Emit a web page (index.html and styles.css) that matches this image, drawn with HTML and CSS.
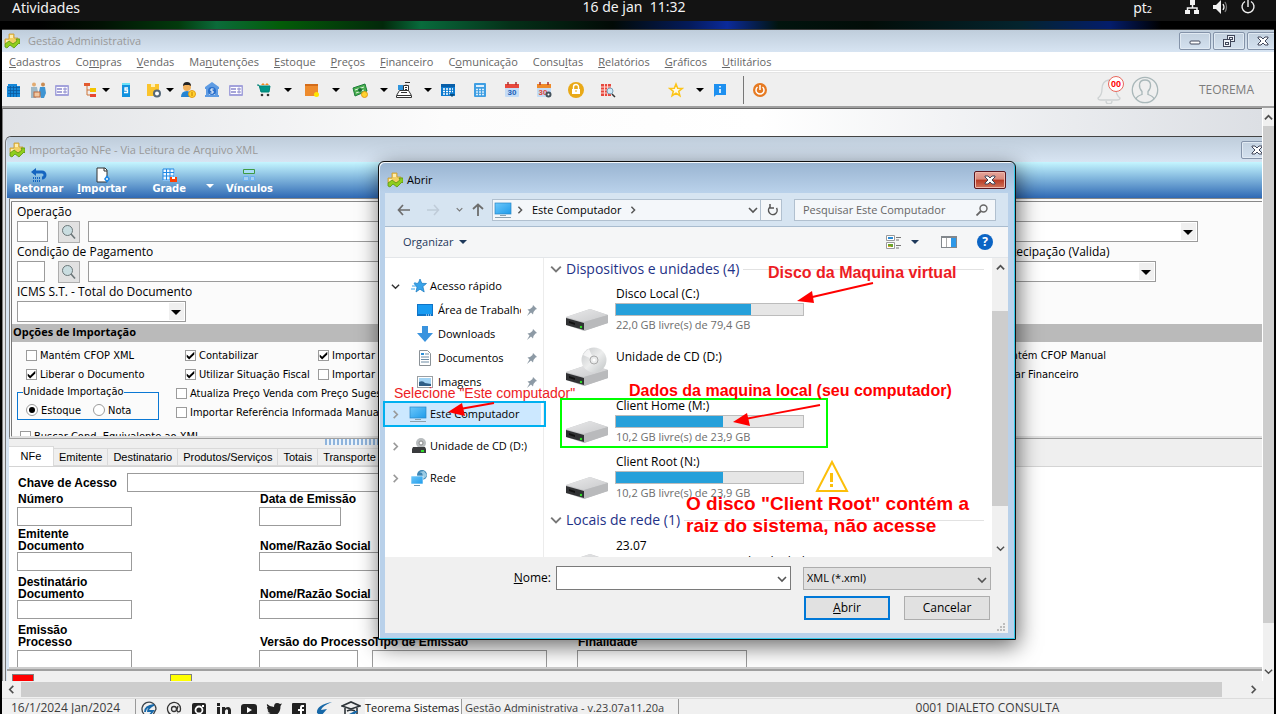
FILE: index.html
```html
<!DOCTYPE html>
<html lang="pt-BR">
<head>
<meta charset="utf-8">
<title>Gestão Administrativa</title>
<link rel="stylesheet" href="styles.css">
</head>
<body>
<svg class="defs" width="0" height="0" aria-hidden="true">
  <defs>
    <linearGradient id="driveTop" x1="0" y1="0" x2="1" y2="1"><stop offset="0" stop-color="#e9e9ea"/><stop offset="1" stop-color="#c9cacc"/></linearGradient>
    <linearGradient id="screen" x1="0" y1="0" x2="1" y2="1"><stop offset="0" stop-color="#6cc8fb"/><stop offset="1" stop-color="#1f9bea"/></linearGradient>
    <linearGradient id="disc" x1="0" y1="0" x2="1" y2="1"><stop offset="0" stop-color="#c4c6c8"/><stop offset=".5" stop-color="#eceded"/><stop offset="1" stop-color="#bfc3c4"/></linearGradient>
    <symbol id="app" viewBox="0 0 16 16"><path d="M5 1h5v4h4v6H1V6h4z" fill="#f2cf63" stroke="#c99a2b" stroke-width=".8"/><path d="M6 2h3v3H6zM2 7h3v3H2z" fill="#ffeeb0"/><path d="M1 11l4-3 4 3 4-3-1-2h4v5l-1-1-5 5-4-3-3 3-2-1z" fill="#8fce1d" stroke="#5b9412" stroke-width=".8"/></symbol>
    <symbol id="caret" viewBox="0 0 8 8"><path d="M0 2h8L4 6z"/></symbol>
    <symbol id="down" viewBox="0 0 10 10"><path d="M1 3l4 4 4-4" fill="none" stroke="currentColor" stroke-width="1.6"/></symbol>
    <symbol id="up" viewBox="0 0 10 10"><path d="M1 7l4-4 4 4" fill="none" stroke="currentColor" stroke-width="2"/></symbol>
    <symbol id="right" viewBox="0 0 10 10"><path d="M3 1l4 4-4 4" fill="none" stroke="currentColor" stroke-width="1.8"/></symbol>
    <symbol id="left" viewBox="0 0 10 10"><path d="M7 1L3 5l4 4" fill="none" stroke="currentColor" stroke-width="1.8"/></symbol>
    <symbol id="close" viewBox="0 0 12 10"><path d="M1 1h3l2 2 2-2h3v1L8 5l3 3v1H8L6 7 4 9H1V8l3-3-3-3z" fill="#fff" stroke="#41475a"/></symbol>
    <symbol id="card" viewBox="0 0 16 16"><rect x="1" y="3" width="14" height="11" rx="1" fill="#a3a2db"/><rect x="2.500" y="5" width="11" height="7" fill="#fff"/><path d="M3 7h5M3 10h5" stroke="#8a88cc" stroke-width="1.500"/><path d="M9 7h4M9 10h4M11 5.500v6" stroke="#8a88cc"/></symbol>
    <symbol id="mag" viewBox="0 0 16 16"><circle cx="6.500" cy="6.500" r="5" fill="#c9dde0" stroke="#6b7678"/><path d="M10 10l4 4.500" stroke="#6b7678" stroke-width="1.600"/></symbol>
    <symbol id="drive" viewBox="0 0 44 24"><path d="M1 9L25 1l18 6v8L19 23 1 17z" fill="#c4c5c7"/><path d="M1 9L25 1l18 6L19 14z" fill="url(#driveTop)"/><path d="M19 14L43 7v8L19 23z" fill="#b9babc"/><path d="M1 10l18 5v7L1 17z" fill="#303133"/><path d="M4 13l6 2v2l-6-2z" fill="#111"/><circle cx="16" cy="19" r="1.200" fill="#31e02b"/></symbol>
    <symbol id="pc" viewBox="0 0 18 16"><rect x="1" y="1" width="16" height="11" fill="url(#screen)" stroke="#2a86c6" stroke-width=".7"/><path d="M1 15.500h16M6 13.500h6" stroke="#8ba0ad"/></symbol>
    <symbol id="pin" viewBox="0 0 12 12"><path d="M7 1l4 4-1.500.5-2 2.500-.5 2.500-2-2L1 12l2.500-4.500-2-2L4 5l2.500-2z" fill="#8d9aa5"/></symbol>
    <symbol id="cal" viewBox="0 0 16 16"><rect x="1" y="4" width="14" height="11" rx="1" fill="#c4dcf6"/><path d="M1 2h14v4H1z"/><path d="M4 0v3M12 0v3" stroke="#a33" stroke-width="1.500"/></symbol>
  </defs>
</svg>

<header class="topbar">
  <button class="activities">Atividades</button>
  <time class="clock">16 de jan&nbsp; 11:32</time>
  <div class="tray">
    <span class="lang">pt<small>2</small></span>
    <svg class="i16" viewBox="0 0 16 16"><path d="M6 0h5v5H6zM1 10h5v4H1zM10 10h5v4h-5z" fill="#f2f2f2"/><path d="M8.500 4v4M3.500 11V8h9.500v3" fill="none" stroke="#f2f2f2" stroke-width="1.500"/></svg>
    <svg class="i16" viewBox="0 0 16 16"><path d="M1 5h3l5-5v14L4 9H1z" fill="#f2f2f2"/><path d="M11 4q2 3 0 6" fill="none" stroke="#f2f2f2" stroke-width="1.300"/><path d="M13 2q3 5 0 10" fill="none" stroke="#777" stroke-width="1.300"/></svg>
    <svg class="i16" viewBox="0 0 16 16"><path d="M5 1.500a6 6 0 1 0 6 0M8 0v7" fill="none" stroke="#f2f2f2" stroke-width="1.400"/></svg>
  </div>
</header>
<div class="wallpaper"></div>

<main class="app">
  <div class="titlebar">
    <svg class="i16"><use href="#app"/></svg><span>Gestão Administrativa</span>
    <div class="winbtns">
      <button aria-label="Minimizar"><svg width="12" height="10" viewBox="0 0 12 10"><rect x="1" y="5" width="10" height="3" rx="1" fill="#fff" stroke="#41475a"/></svg></button>
      <button aria-label="Restaurar"><svg width="12" height="12" viewBox="0 0 12 12"><g fill="#eef3f8" stroke="#41475a"><rect x="4.500" y=".5" width="7" height="6"/><rect x="6.500" y="2.500" width="3" height="2"/><rect x=".5" y="4.500" width="7" height="7"/><rect x="2.500" y="7.500" width="3" height="2"/></g></svg></button>
      <button aria-label="Fechar"><svg width="12" height="10"><use href="#close"/></svg></button>
    </div>
  </div>
  <nav class="menubar">
    <button><u>C</u>adastros</button><button>Co<u>m</u>pras</button><button><u>V</u>endas</button><button>Ma<u>n</u>utenções</button><button><u>E</u>stoque</button><button><u>P</u>reços</button><button><u>F</u>inanceiro</button><button>C<u>o</u>municação</button><button>Consu<u>l</u>tas</button><button><u>R</u>elatórios</button><button><u>G</u>ráficos</button><button><u>U</u>tilitários</button>
  </nav>
  <div class="toolbar">
    <button aria-label="Empresa"><svg class="i16" viewBox="0 0 16 16"><path d="M2 2h9v2h3v11H1V4h1z" fill="#1587d8"/><path d="M2 5.500h12M2 8.500h12M2 11.500h12M4.500 4v11M7.500 4v11M10.500 4v11" stroke="#0b5a9e" stroke-width=".8"/></svg></button>
    <button aria-label="Pessoas"><svg class="i16" viewBox="0 0 16 16"><circle cx="4" cy="2.500" r="2" fill="#e2ab71"/><circle cx="13" cy="2.500" r="2" fill="#c98c54"/><path d="M1 5h6l1 5-2 6H1z" fill="#9fb9c7"/><path d="M10 5h5l1 6-2 5h-3L9 10z" fill="#3f95d3"/><rect x="4" y="10" width="6" height="5" fill="#f1c7a0" stroke="#bd6a3e"/></svg></button>
    <button aria-label="Cadastro"><svg class="i16"><use href="#card"/></svg></button>
    <button class="g4" aria-label="Estrutura"><svg class="i16" viewBox="0 0 16 16"><path d="M2 1h6v3H2z" fill="#e35a2e"/><path d="M8 6h6v4H8z" fill="#f3c500"/><path d="M8 12h6v3H8z" fill="#e8472f"/><path d="M5 4v9h3M5 8h3" fill="none" stroke="#cf7438"/></svg></button>
    <button class="drop" aria-label="Mais"><svg><use href="#caret"/></svg></button>
    <button class="g4" aria-label="Telefone"><svg class="i16" viewBox="0 0 16 16"><path d="M4 1h8v14H4z" fill="#1292df"/><path d="M4 1h8v2H4z" fill="#6ee3f7"/><path d="M10 6H7v2h2.500v2.500H6" fill="none" stroke="#fff" stroke-width="1.300"/></svg></button>
    <button class="g4" aria-label="Produtos"><svg class="i16" viewBox="0 0 16 16"><path d="M1 2h12v12H1z" fill="#fbc42c"/><path d="M5 2h4v3H5z" fill="#fff0b3"/><circle cx="11" cy="11.500" r="3" fill="#fff" stroke="#57697a" stroke-width="2"/></svg></button>
    <button class="drop" aria-label="Mais"><svg><use href="#caret"/></svg></button>
    <button class="g2" aria-label="Cliente"><svg class="i16" viewBox="0 0 16 16"><path d="M1 15q0-6 6-6 4 0 5 6z" fill="#2585d3"/><circle cx="7" cy="5" r="4" fill="#f2b15c"/><path d="M3 4q0-4 4-4t4 4L9 3H5z" fill="#222"/><circle cx="12" cy="12" r="3.500" fill="#ffd32f" stroke="#e39b18"/><path d="M12 10v4" stroke="#c77c00"/></svg></button>
    <button aria-label="Banco"><svg class="i16" viewBox="0 0 16 16"><path d="M1 5l7-5 7 5v2H1zM2 7h3v6H2zM11 7h3v6h-3zM1 13h14v2H1z" fill="#5f9ce3"/><circle cx="8" cy="9" r="4" fill="#2b71cc"/><path d="M9.500 7H7v2h2v2H6.500" fill="none" stroke="#fff"/></svg></button>
    <button aria-label="Fichas"><svg class="i16"><use href="#card"/></svg></button>
    <button class="g4" aria-label="Vendas"><svg class="i16" viewBox="0 0 16 16"><path d="M1 3h2l2 7h8l1-6H4" fill="#009688" stroke="#008377"/><path d="M5 3l2-2 2 2 2-2 2 2z" fill="#f18a20"/><circle cx="6" cy="13" r="1.300" fill="#333"/><circle cx="12" cy="13" r="1.300" fill="#333"/></svg></button>
    <button class="drop g8" aria-label="Mais"><svg><use href="#caret"/></svg></button>
    <button class="g8" aria-label="Caixa"><svg class="i16" viewBox="0 0 16 16"><path d="M1 2h13v12H1z" fill="#ee8b2d"/><path d="M1 2h13v2H1z" fill="#d46c1a"/><circle cx="12.500" cy="12.500" r="2.500" fill="#ffe500"/></svg></button>
    <button class="drop g8" aria-label="Mais"><svg><use href="#caret"/></svg></button>
    <button class="g8" aria-label="Financeiro"><svg class="i16" viewBox="0 0 16 16"><path d="M1 6l12-4 2 7-12 5z" fill="#4caf50" stroke="#1c7c3a"/><path d="M3 8l9-3M4 11l8-3" stroke="#dff3df"/><circle cx="8" cy="8" r="2" fill="#176b34"/><circle cx="12.500" cy="12.500" r="3" fill="#ffd32f" stroke="#e39b18"/></svg></button>
    <button class="drop g8" aria-label="Mais"><svg><use href="#caret"/></svg></button>
    <button class="g4" aria-label="Registradora"><svg class="i16" viewBox="0 0 16 16"><path d="M3.500 8.500h9l3 5v2H.500v-2z" fill="#fff" stroke="#333"/><path d="M2 3h5v5H2z" fill="#2f95dd"/><path d="M7.500 3.500h5v5h-5z" fill="#fff" stroke="#333"/><path d="M9 .500h5M10 2.500v1M9 5.500h2M9 7.500h2M12 5.500h1M5 10.500h6M1 13.500h14" stroke="#333"/></svg></button>
    <button class="drop g8" aria-label="Mais"><svg><use href="#caret"/></svg></button>
    <button class="g4" aria-label="Agenda"><svg class="i16" viewBox="0 0 16 16"><path d="M1 2h14v12H1z" fill="#0d7bd0"/><path d="M1 2h14v3H1z" fill="#0a5fa8"/><path d="M3 7h10M3 9.500h10M3 12h7" stroke="#fff" stroke-width="1.500" stroke-dasharray="2 1"/><path d="M9 12h6l-3 3z" fill="#094d80"/></svg></button>
    <button class="g8" aria-label="Calculadora"><svg class="i16" viewBox="0 0 16 16"><rect x="2" y="1" width="12" height="14" rx="1" fill="#3f9ee2"/><path d="M4 3h8v2H4z" fill="#dceefc"/><path d="M4 7.500h8M4 10h8M4 12.500h8" stroke="#dceefc" stroke-width="1.500" stroke-dasharray="2 1"/></svg></button>
    <button class="g8" aria-label="Calendário"><svg class="i16"><use href="#cal" fill="#e8483c"/><text x="8" y="13" class="daynum">30</text></svg></button>
    <button class="g8" aria-label="Configurar calendário"><svg class="i16"><use href="#cal" fill="#ef8a2a"/><text x="7" y="13" class="daynum red">30</text><circle cx="12.500" cy="12.500" r="2" fill="#fff" stroke="#44525c" stroke-width="2"/></svg></button>
    <button class="g8" aria-label="Bloquear"><svg class="i16" viewBox="0 0 16 16"><circle cx="8" cy="8" r="8" fill="#e9a917"/><path d="M4 7h8v5H4z" fill="#fff"/><path d="M5.500 7V5a2.500 2.500 0 0 1 5 0v2" fill="none" stroke="#fff" stroke-width="1.400"/><path d="M8 8v2" stroke="#e9a917"/></svg></button>
    <button class="g8" aria-label="Pesquisa"><svg class="i16" viewBox="0 0 16 16"><rect x="1" y="2" width="10" height="12" fill="#e5483e"/><path d="M1 5h10M1 8h10M1 11h10M4.500 2v12M7.500 2v12" stroke="#ffd5cf"/><circle cx="10" cy="9" r="3" fill="#cfe8f7" stroke="#7aa0b8"/><path d="M12 12l3 3" stroke="#333" stroke-width="1.500"/></svg></button>
    <button class="g44" aria-label="Favoritos"><svg class="i16" viewBox="0 0 16 16"><path d="M8 2l1.700 4.200 4.500.3-3.500 2.800 1.200 4.400L8 11.200l-3.900 2.500 1.200-4.400L1.800 6.500l4.500-.3z" fill="#fffbe6" stroke="#fcc419" stroke-width="1.500"/></svg></button>
    <button class="drop g8" aria-label="Mais"><svg><use href="#caret"/></svg></button>
    <button class="g4" aria-label="Informação"><svg class="i16" viewBox="0 0 16 16"><path d="M2 2h12v11H4l-2 2z" fill="#1e90f0"/><path d="M8 4v1.500M8 7v4" stroke="#fff" stroke-width="1.600"/></svg></button>
    <span class="sep"></span>
    <button class="g4" aria-label="Sair"><svg class="i16" viewBox="0 0 16 16"><circle cx="8" cy="8" r="7" fill="#e67a22"/><path d="M5.500 5a4 4 0 1 0 5 0M8 3v5" fill="none" stroke="#fff" stroke-width="1.500"/></svg></button>
    <div class="user">
      <button class="bell" aria-label="Notificações"><svg width="28" height="28" viewBox="0 0 28 28"><path d="M3 22q4-3 4-9 0-8 7-9 7 1 7 9 0 6 4 9 0 2-3 2H6q-3 0-3-2zM11 25q0 3 3 3t3-3" fill="none" stroke="#ced2d3" stroke-width="1.300"/></svg><span class="badge">00</span></button>
      <button aria-label="Usuário"><svg width="28" height="28" viewBox="0 0 28 28"><g fill="none" stroke="#a9b7b9" stroke-width="1.300"><circle cx="14" cy="14" r="12.700"/><path d="M5 23q1-3 6-4.500v-3Q8 12 8.500 8.500 9 4 14 4t5.500 4.500q.5 3.500-2.500 7v3q5 1.500 6 4.500"/></g></svg></button>
      <span class="uname">TEOREMA</span>
    </div>
  </div>

  <div class="mdi">
    <div class="desk">
      <section class="child">
        <div class="titlebar inner">
          <svg class="i16"><use href="#app"/></svg><span>Importação NFe - Via Leitura de Arquivo XML</span>
          <div class="winbtns"><button aria-label="Fechar janela"><svg width="12" height="10"><use href="#close"/></svg></button></div>
        </div>
        <div class="ribbon">
          <button class="rb1"><svg class="i16" viewBox="0 0 16 16"><path d="M2 5h9a3 3 0 0 1 0 6" fill="none" stroke="#1565c0" stroke-width="3"/><path d="M0 5l5-4v8z" fill="#1565c0"/><path d="M2 11h8M2 14h8" stroke="#1565c0" stroke-dasharray="1 1" stroke-width="2"/></svg>Retornar</button>
          <button class="rb2"><svg class="i16" viewBox="0 0 16 16"><path d="M3 1h8l2 2v12H3z" fill="#fff" stroke="#333"/><path d="M10 1v3h3" fill="none" stroke="#333"/><path d="M13 8l3 4-3 4-3-4z" fill="#1e88e5"/><circle cx="13" cy="12" r="1" fill="#fff"/></svg><span><u>I</u>mportar</span></button>
          <button class="rb3"><svg class="i16" viewBox="0 0 16 16"><path d="M2 2h12v12H2z" fill="#eef7ff"/><path d="M2 2h11v11H2zM2 5.500h11M2 9h11M5.500 2v11M9 2v11" fill="none" stroke="#1e88e5"/><path d="M9 10h7v5H9z" fill="#ff3d00"/><path d="M11 10h3v2h-3z" fill="#fff"/></svg>Grade</button>
          <button class="rbdrop" aria-label="Opções de grade"><svg><use href="#caret"/></svg></button>
          <button class="rb4"><svg class="i16" viewBox="0 0 16 16"><path d="M2.500 2.500h11v4h-11z" fill="#a9ddf5" stroke="#3f9b43"/><path d="M2.500 9.500h5v4h-5zM9.500 9.500h4v4h-4z" fill="#a5cff5" stroke="#6bb1f0"/></svg>Vínculos</button>
        </div>

        <div class="panel">
          <div class="fields">
            <div class="field"><label for="op">Operação</label>
              <div class="ctl"><input id="op" class="w31"><button class="lookup" aria-label="Buscar operação"><svg class="i16"><use href="#mag"/></svg></button><input class="wide" aria-label="Descrição da operação"><span class="combo c1"><select aria-label="Tipo"></select></span></div></div>
            <div class="field"><div class="labels"><label for="cp">Condição de Pagamento</label><label for="ant">Antecipação (Valida)</label></div>
              <div class="ctl"><input id="cp" class="w28"><button class="lookup" aria-label="Buscar condição"><svg class="i16"><use href="#mag"/></svg></button><input class="wide" aria-label="Descrição da condição"><span class="combo c2"><select id="ant"></select></span></div></div>
            <div class="field"><label for="st">ICMS S.T. - Total do Documento</label>
              <div class="ctl"><span class="combo c3"><select id="st"></select></span></div></div>
          </div>
          <h2 class="band">Opções de Importação</h2>
          <div class="options">
            <label><input type="checkbox">Mantém CFOP XML</label><label><input type="checkbox" checked>Contabilizar</label><label><input type="checkbox" checked>Importar Duplicatas</label><label><input type="checkbox">Mantém CFOP Manual</label>
            <label><input type="checkbox" checked>Liberar o Documento</label><label><input type="checkbox" checked>Utilizar Situação Fiscal</label><label><input type="checkbox">Importar Pedidos</label><label><input type="checkbox">Gerar Financeiro</label>
          </div>
          <div class="unit">
            <fieldset><legend>Unidade Importação</legend><label><input type="radio" name="un" checked>Estoque</label><label><input type="radio" name="un">Nota</label></fieldset>
            <div class="unitopts"><label><input type="checkbox">Atualiza Preço Venda com Preço Sugestão</label><label><input type="checkbox">Importar Referência Informada Manualmente</label></div>
          </div>
          <label class="last"><input type="checkbox">Buscar Cond. Equivalente ao XML</label>
        </div>

        <div class="splitter"><span class="grip"></span></div>
        <div class="tabs" role="tablist">
          <button class="on" role="tab">NFe</button><button role="tab">Emitente</button><button role="tab">Destinatario</button><button role="tab">Produtos/Serviços</button><button role="tab">Totais</button><button role="tab">Transporte</button>
        </div>
        <div class="page">
          <div class="key"><label for="chave">Chave de Acesso</label><input id="chave"></div>
          <div class="row first">
            <div><label for="num">Número</label><input id="num" class="w115"></div>
            <div><label for="dt">Data de Emissão</label><input id="dt" class="w82"></div>
          </div>
          <h3>Emitente</h3>
          <div class="row">
            <div><label for="d1">Documento</label><input id="d1" class="w115"></div>
            <div class="span"><label for="n1">Nome/Razão Social</label><input id="n1" class="w400"></div>
          </div>
          <h3>Destinatário</h3>
          <div class="row">
            <div><label for="d2">Documento</label><input id="d2" class="w115"></div>
            <div class="span"><label for="n2">Nome/Razão Social</label><input id="n2" class="w400"></div>
          </div>
          <h3>Emissão</h3>
          <div class="row lastrow">
            <div><label for="pr">Processo</label><input id="pr" class="w115"></div>
            <div><label for="vp">Versão do Processo</label><input id="vp" class="w99"></div>
            <div><label for="te">Tipo de Emissão</label><input id="te" class="w175"></div>
            <div><label for="fi">Finalidade</label><input id="fi" class="w170"></div>
          </div>
        </div>
        <div class="legend"><span class="sw red"></span><span class="sw yellow"></span></div>
      </section>
    </div>
    <div class="vscroll"><svg><use href="#up"/></svg><div class="vtrack"><div class="vthumb"></div></div><svg><use href="#down"/></svg></div>
  </div>
  <div class="hscroll"><svg><use href="#left"/></svg><div class="hthumb"></div><svg><use href="#right"/></svg></div>

  <footer class="status">
    <span class="date">16/1/2024 Jan/2024</span>
    <div class="social">
      <a href="#" aria-label="Site"><svg viewBox="0 0 16 16"><path d="M3 13A7 7 0 1 1 15 8l-3 6" fill="none" stroke="#3d454c" stroke-width="1.300"/><path d="M4 11q0-6 9-7-6 3-6 6h5l-4 5" fill="none" stroke="#1769aa" stroke-width="1.800"/></svg></a>
      <a href="#" aria-label="E-mail"><svg viewBox="0 0 16 16"><path d="M12 13a6.500 6.500 0 1 1 2.500-5c0 4-4 3.500-3.500.5L12 5" fill="none" stroke="#333" stroke-width="1.300"/><circle cx="8" cy="8" r="2.500" fill="none" stroke="#333" stroke-width="1.300"/></svg></a>
      <a href="#" aria-label="Instagram"><svg viewBox="0 0 16 16"><rect x="1" y="2" width="14" height="14" rx="2" fill="#222"/><circle cx="8" cy="9" r="3.500" fill="none" stroke="#fff" stroke-width="1.800"/><path d="M11 4h2v2h-2z" fill="#fff"/></svg></a>
      <a href="#" aria-label="LinkedIn"><svg viewBox="0 0 16 16"><path d="M1 6h3v9H1zM1 2h3v3H1zM6 6h3v1q5-3 6 2v6h-3V9q-2-2-3 1v5H6z" fill="#222"/></svg></a>
      <a href="#" aria-label="YouTube"><svg viewBox="0 0 16 16"><rect y="3" width="16" height="12" rx="3" fill="#222"/><path d="M6 6l5 3-5 3z" fill="#fff"/></svg></a>
      <a href="#" aria-label="Twitter"><svg viewBox="0 0 16 16"><path d="M1 3q3 3 7 3 0-4 3-4 2 0 3 1l2-.5-1.500 2.500q0 9-8 10-4 0-6-2 3 0 4-1-2 0-3-2.500h1Q1 8 1 6h1Q.5 5 1 3z" fill="#222"/></svg></a>
      <a href="#" aria-label="Facebook"><svg viewBox="0 0 16 16"><rect x="1" y="2" width="14" height="14" rx="1" fill="#222"/><path d="M13 5h-2q-1 0-1 2v9M7 9h6" fill="none" stroke="#fff" stroke-width="2"/></svg></a>
      <a href="#" aria-label="Teorema"><svg viewBox="0 0 16 16"><path d="M1 12Q0 4 16 1 6 5 5 9l6-1-6 7z" fill="#1668a8"/></svg></a>
      <a href="#" class="cap" aria-label="Universidade"><svg viewBox="0 0 20 16"><path d="M1 5l9-4 9 4-9 3z" fill="none" stroke="#2d3338" stroke-width="1.600"/><path d="M4 7v8h12V7M6 10q4-2 8 0" fill="none" stroke="#2d3338" stroke-width="1.600"/><path d="M8 13l6-3h3l-6 6z" fill="#1769aa"/></svg></a>
    </div>
    <span class="brand">Teorema Sistemas</span>
    <span class="ver">Gestão Administrativa - v.23.07a11.20a</span>
    <span class="who">0001 DIALETO CONSULTA</span>
  </footer>
</main>

<section class="dialog" role="dialog" aria-label="Abrir">
  <div class="dtitle"><svg class="i16"><use href="#app"/></svg><span>Abrir</span><button class="dclose" aria-label="Fechar"><svg width="12" height="10"><use href="#close"/></svg></button></div>
  <div class="dbody">
    <div class="navrow">
      <button class="nb" aria-label="Voltar"><svg width="14" height="12" viewBox="0 0 14 12"><path d="M6 1L1.500 6 6 11M1.500 6H13" fill="none" stroke="#6d6d6d" stroke-width="1.700"/></svg></button>
      <button class="nb" aria-label="Avançar"><svg width="14" height="12" viewBox="0 0 14 12"><path d="M8 1l4.500 5L8 11M12.500 6H1" fill="none" stroke="#bfcbd8" stroke-width="1.500"/></svg></button>
      <button class="nb small" aria-label="Recentes"><svg width="7" height="7"><use href="#down"/></svg></button>
      <button class="nb up" aria-label="Acima"><svg width="12" height="14" viewBox="0 0 12 14"><path d="M1 6l5-4.500L11 6M6 1.500V13" fill="none" stroke="#6d6d6d" stroke-width="1.800"/></svg></button>
      <div class="path"><svg width="18" height="16"><use href="#pc"/></svg><svg class="ch" width="8" height="8"><use href="#right"/></svg><span>Este Computador</span><svg class="ch" width="8" height="8"><use href="#right"/></svg><button class="pd" aria-label="Histórico"><svg width="10" height="10"><use href="#down"/></svg></button><button class="rf" aria-label="Atualizar"><svg width="12" height="12" viewBox="0 0 12 12"><path d="M3 3a4.300 4.300 0 1 0 6.500 1M3 0v4h4" fill="none" stroke="#555" stroke-width="1.500"/></svg></button></div>
      <div class="search"><input aria-label="Pesquisar" placeholder="Pesquisar Este Computador"><svg width="12" height="12" viewBox="0 0 12 12"><circle cx="7.500" cy="4.500" r="3.500" fill="none" stroke="#666" stroke-width="1.400"/><path d="M5 7l-4.500 4.500" stroke="#666" stroke-width="1.800"/></svg></div>
    </div>
    <div class="cmdrow">
      <button class="org">Organizar <svg><use href="#caret"/></svg></button>
      <button class="view" aria-label="Modo de exibição"><svg width="16" height="16" viewBox="0 0 16 16"><path d="M.5 1.500h8v5h-8zM.5 8.500h8v6h-8z" fill="#fff" stroke="#9a9a9a"/><path d="M2 3h5v2H2z" fill="#2a8ad4"/><path d="M2 10h5v3H2z" fill="#6aa32b"/><path d="M2 12h3v1H2z" fill="#e0a030"/><path d="M10 3.500h5M10 6h3M10 11.500h5M10 14h3" stroke="#777"/></svg></button>
      <button class="vdrop" aria-label="Mais modos"><svg><use href="#caret"/></svg></button>
      <button class="pane" aria-label="Painel"><svg width="16" height="14" viewBox="0 0 16 14"><rect x=".5" y="1.500" width="15" height="11" fill="#fff" stroke="#82878c"/><path d="M0 1h16v2H0z" fill="#82878c"/><path d="M10 3h5v9h-5z" fill="#2d98e8"/><path d="M5.500 3v9" stroke="#aaa"/></svg></button>
      <button class="help" aria-label="Ajuda">?</button>
    </div>
    <div class="browse">
      <ul class="tree">
        <li class="root"><svg class="tw dark"><use href="#down"/></svg><svg class="i16" viewBox="0 0 16 16"><path d="M9 1l1.800 4.300 4.700.2-3.600 3L13.200 14 9 11.200 5 14l1-5-3-3.500 4.300-.3z" fill="#38a3ea" stroke="#1878bd" stroke-width=".7"/><path d="M1 8h4M0 11h4M3 5h2" stroke="#38a3ea"/></svg><span>Acesso rápido</span></li>
        <li class="leaf"><svg class="i16" viewBox="0 0 16 16"><rect y="2" width="16" height="12" fill="#0f74c7"/><rect x="1" y="3" width="14" height="9" fill="#189bf2"/><path d="M9 13h5" stroke="#fff" stroke-dasharray="1 1"/></svg><span>Área de Trabalho</span><svg class="pin"><use href="#pin"/></svg></li>
        <li class="leaf"><svg class="i16" viewBox="0 0 16 16"><path d="M5 0h6v7h5l-8 9-8-9h5z" fill="#3a93de"/></svg><span>Downloads</span><svg class="pin"><use href="#pin"/></svg></li>
        <li class="leaf"><svg class="i16" viewBox="0 0 16 16"><path d="M2.500.5h8l3 3v12h-11z" fill="#fff" stroke="#8a9196"/><path d="M4 7h8M4 9.500h8M4 12h8M8 4h4" stroke="#6d8ba3"/><path d="M4 3h3v2H4z" fill="#2b8fd8"/></svg><span>Documentos</span><svg class="pin"><use href="#pin"/></svg></li>
        <li class="leaf"><svg class="i16" viewBox="0 0 16 16"><rect x=".5" y="2.500" width="15" height="11" fill="#fff" stroke="#9a9fa3"/><rect x="2" y="4" width="12" height="8" fill="#a3d4f4"/><path d="M2 8q4-2 6 1l6 1v2H2z" fill="#2f5f86"/></svg><span>Imagens</span><svg class="pin"><use href="#pin"/></svg></li>
        <li class="root sel"><svg class="tw"><use href="#right"/></svg><svg width="18" height="16"><use href="#pc"/></svg><span>Este Computador</span></li>
        <li class="root"><svg class="tw"><use href="#right"/></svg><svg class="i16" viewBox="0 0 16 16"><circle cx="10" cy="5" r="5" fill="#b9bdbf"/><circle cx="10" cy="5" r="2" fill="#fff" stroke="#888"/><path d="M2 9h12l1 2v4H1v-4z" fill="#3a3b3d"/><path d="M10 12h3v2h-3z" fill="#31e02b"/></svg><span>Unidade de CD (D:)</span></li>
        <li class="root"><svg class="tw"><use href="#right"/></svg><svg class="i16" viewBox="0 0 16 16"><circle cx="11" cy="5" r="5" fill="#3c85b4"/><path d="M8 2l3 1 1 3-2 3 4-1 2-3-3-4z" fill="#9bcbe3"/><rect y="6" width="12" height="8" fill="url(#screen)" stroke="#fff" stroke-width=".6"/><path d="M3 15.500h6" stroke="#6b98b3"/></svg><span>Rede</span></li>
      </ul>
      <div class="files">
        <h4><svg><use href="#down"/></svg>Dispositivos e unidades (4)<i></i></h4>
        <div class="drive"><svg class="dr"><use href="#drive"/></svg><div><span>Disco Local (C:)</span><div class="bar"><b style="width:72%"></b></div><small>22,0 GB livre(s) de 79,4 GB</small></div></div>
        <div class="drive cd"><svg class="cdi" viewBox="0 0 44 40"><use href="#drive" y="16" width="44" height="24"/><circle cx="29" cy="13" r="12.500" fill="url(#disc)"/><path d="M29 13L18 8a12 12 0 0 1 6-6z" fill="#fff" opacity=".7"/><circle cx="29" cy="13" r="4" fill="#e9eaea" stroke="#aaa"/><circle cx="29" cy="13" r="1.500" fill="#fff"/></svg><div><span>Unidade de CD (D:)</span></div></div>
        <div class="drive"><svg class="dr"><use href="#drive"/></svg><div><span>Client Home (M:)</span><div class="bar"><b style="width:57%"></b></div><small>10,2 GB livre(s) de 23,9 GB</small></div></div>
        <div class="drive"><svg class="dr"><use href="#drive"/></svg><div><span>Client Root (N:)</span><div class="bar"><b style="width:57%"></b></div><small>10,2 GB livre(s) de 23,9 GB</small></div></div>
        <h4><svg><use href="#down"/></svg>Locais de rede (1)<i></i></h4>
        <div class="drive net"><svg class="dr"><use href="#drive"/></svg><div><span>23.07</span><span>24.10.254.20 SVT (servidor de dados)</span></div></div>
      </div>
      <div class="dscroll"><svg><use href="#up"/></svg><div class="dtrack"><div class="dthumb"></div></div><svg><use href="#down"/></svg></div>
    </div>
    <div class="dfoot">
      <div class="frow"><label for="nome"><u>N</u>ome:</label><div class="nome"><input id="nome"><svg><use href="#down"/></svg></div><div class="filter"><select aria-label="Tipo de arquivo"><option>XML (*.xml)</option></select><svg><use href="#down"/></svg></div></div>
      <div class="brow"><button class="primary"><u>A</u>brir</button><button>Cancelar</button></div>
      <svg class="size" viewBox="0 0 8 8"><path d="M6 0h2v2H6zM3 3h2v2H3zM6 3h2v2H6zM0 6h2v2H0zM3 6h2v2H3zM6 6h2v2H6z" fill="#bdbdbd"/></svg>
    </div>
  </div>

  <div class="mark bluebox"></div>
  <div class="mark greenbox"></div>
  <p class="mark n1">Disco da Maquina virtual</p>
  <p class="mark n2">Selecione "Este computador"</p>
  <p class="mark n3">Dados da maquina local (seu computador)</p>
  <p class="mark n4">O disco "Client Root" contém a raiz do sistema, não acesse</p>
  <svg class="mark arrows" width="638" height="479" viewBox="378 161 638 479"><g stroke="#f00" stroke-width="1.800" fill="#f00"><path d="M873 283L808 298"/><path d="M797 301l15-10 2 12z" stroke="none"/><path d="M820 405l-75 14"/><path d="M733 422l14-9 3 13z" stroke="none"/><path d="M494 403l-34 6"/><path d="M448 412l14-9 3 13z" stroke="none"/></g><path d="M832 462l15 29h-30z" fill="#fff" stroke="#fcbf0a" stroke-width="2"/><path d="M831.500 473v9M831.500 484v3" stroke="#fcbf0a" stroke-width="3"/></svg>
</section>
</body>
</html>
```
FILE: styles.css
```css
* { box-sizing: border-box; }
body { margin: 0; height: 100vh; overflow: hidden; display: flex; flex-direction: column; position: relative; background: #000; font: 12px/16px "Open Sans", "Noto Sans", sans-serif; color: #000; }
button { border: 0; padding: 0; background: none; font: inherit; color: inherit; display: flex; align-items: center; justify-content: center; }
input, select { font: inherit; border: 1px solid #9b9b9b; background: #fff; border-radius: 0; margin: 0; padding: 0 4px; height: 21px; }
svg { flex: none; display: block; }
h2, h3, h4, p, ul, fieldset { margin: 0; padding: 0; }
.defs { position: absolute; }
.i16 { width: 16px; height: 16px; }

.topbar { height: 21px; flex: none; display: grid; grid-template-columns: 1fr auto 1fr; background: #131313; color: #f2f2f2; font: 14px/16px "Noto Sans", sans-serif; padding: 0 20px 0 12px; }
.activities { justify-self: start; height: 16px; }
.clock { line-height: 14px; }
.tray { justify-self: end; display: flex; gap: 12px; height: 16px; }
.lang { margin-right: 20px; }
.lang small { font-size: 9px; }
.wallpaper { height: 8px; flex: none; background: linear-gradient(90deg, #000 3%, #021204 8%, #023a0c 14%, #0b6b3a 17%, #035c08 22%, #02280a 30%, #086b3c 33%, #043018 40%, #020a06 48%, #041a5a 54%, #0b2a9a 57%, #01140e 61%, #020d08 68%, #04242e 80%, #041d6b 87%, #000 91%); }

.app { flex: 1; min-height: 0; display: flex; flex-direction: column; margin: 0 2px; background: #f0f0f0; border-top: 1px solid #3c3c3c; }
.titlebar { height: 22px; flex: none; display: flex; align-items: center; gap: 8px; padding-left: 2px; background: linear-gradient(#bfcddb, #d7e4f2); color: #999; font-size: 11px; overflow: hidden; }
.winbtns { margin-left: auto; display: flex; gap: 2px; }
.winbtns button { width: 32px; height: 18px; border: 1px solid #8493a9; border-radius: 2px; box-shadow: inset 0 0 0 1px #e1eaf3; }
.titlebar .winbtns { margin-right: -5px; }
.menubar { height: 21px; flex: none; display: flex; gap: 15px; padding: 2px 7px 1px; background: #fff; border-bottom: 3px double #e4e4e4; color: #666; font-size: 11px; }
.toolbar { height: 33px; flex: none; display: flex; align-items: center; background: #efefef; }
.toolbar button { width: 24px; height: 24px; flex: none; }
.toolbar .drop { width: 8px; }
.drop svg, .rbdrop svg, .org svg, .vdrop svg { width: 8px; height: 8px; }
.toolbar .g2 { margin-left: 2px; }
.toolbar .g4 { margin-left: 4px; }
.toolbar .g8 { margin-left: 8px; }
.toolbar .g44 { margin-left: 44px; }
.sep { width: 1px; height: 28px; background: #777; margin-left: 11px; }
.daynum { font: bold 8px "Liberation Sans", sans-serif; fill: #1c62b8; text-anchor: middle; }
.daynum.red { fill: #e04a3a; }
.user { margin-left: auto; display: flex; align-items: center; gap: 8px; padding-right: 20px; color: #7c7c7c; }
.toolbar .user button { width: 28px; height: 28px; }
.bell { position: relative; }
.badge { position: absolute; right: -1px; top: 0; width: 16px; height: 16px; border: 1px solid #e8675c; border-radius: 50%; background: #fff; color: #f00; font: bold 9px/14px "Liberation Sans", sans-serif; text-align: center; }
.uname { margin-left: 32px; }

.mdi { flex: 1; min-height: 0; display: flex; border-top: 2px solid #a0a0a0; }
.desk { flex: 1; min-width: 0; display: flex; padding: 27px 0 0 2px; border-top: 1px solid #696969; border-left: 1px solid #808080; background: linear-gradient(90deg, #e1e3e6, #fcfcfc 35%, #fff 60%, #dcdfe4); }
.child { flex: 1; min-width: 0; display: flex; flex-direction: column; border-top: 1px solid #444; border-left: 1px solid #777; border-top-left-radius: 6px; padding-left: 1px; background: #d7e4f2; overflow: hidden; }
.inner { height: 25px; gap: 4px; padding-left: 2px; }
.titlebar.inner .winbtns { margin-right: -11px; }
.ribbon { height: 36px; flex: none; display: flex; padding: 5px 7px 2px; background: linear-gradient(#c5f6ff, #2f69b4); color: #fff; font: bold 11px/12px "DejaVu Sans Condensed", "Open Sans", sans-serif; }
.ribbon button { flex-direction: column; justify-content: flex-start; }
.rb2 { margin-left: 14px; }
.rb3 { margin-left: 26px; }
.rb4 { margin-left: 12px; }
.ribbon .rbdrop { margin-left: 20px; padding-top: 15px; fill: #fff; }

.panel { height: 240px; flex: none; overflow: hidden; margin-left: 2px; padding-top: 2px; background: #fbfbfb; border-top: 4px double #888; border-left: 3px double #777; border-bottom: 2px solid #e0e0e0; font: 11px/15px "DejaVu Sans Condensed", "DejaVu Sans", sans-serif; }
.fields { font: 12px/16px "Open Sans", sans-serif; }
.field { height: 40px; padding-left: 5px; }
.field label { display: block; height: 17px; }
.labels { display: flex; }
.labels label + label { margin-left: auto; width: 265px; }
.ctl { display: flex; }
.w31 { width: 31px; margin-right: 10px; }
.w28 { width: 28px; margin-right: 13px; }
.lookup { width: 22px; height: 22px; border: 1px solid #adadad; background: #e1e1e1; }
.wide { flex: 1; margin: 0 50px 0 8px; }
.combo { position: relative; display: block; height: 21px; }
.combo select, .filter select { width: 100%; appearance: none; }
.combo::after { content: ""; position: absolute; right: 2px; top: 2px; width: 15px; height: 17px; background: #f0f0f0; }
.combo::before { content: ""; position: absolute; z-index: 1; right: 5px; top: 9px; border: 5px solid transparent; border-top-color: #000; border-bottom: 0; }
.c1 { width: 202px; margin-right: 64px; }
.c2 { width: 160px; margin-right: 106px; }
.c3 { width: 169px; }
.band { height: 18px; padding-left: 1px; background: #bababa; font: bold 11px/16px "Open Sans", sans-serif; }
.panel label { white-space: nowrap; }
.options { display: grid; grid-template-columns: 159px 133px 665px 1fr; grid-auto-rows: 19px; padding: 4px 0 0 14px; }
.options label, .unitopts label, .last, fieldset label { display: flex; align-items: center; gap: 3px; }
input[type=checkbox] { appearance: none; width: 11px; height: 11px; padding: 0; flex: none; position: relative; }
input[type=checkbox]:checked::after { content: ""; position: absolute; inset: 0; background: #000; clip-path: polygon(8% 40%, 35% 65%, 92% 8%, 92% 38%, 35% 95%, 8% 68%); }
input[type=radio] { appearance: none; width: 12px; height: 12px; padding: 0; border-radius: 50%; flex: none; display: grid; place-items: center; }
input[type=radio]:checked::after { content: ""; width: 6px; height: 6px; border-radius: 50%; background: #000; }
.unit { display: flex; gap: 17px; padding-left: 5px; }
fieldset { width: 142px; height: 35px; min-width: 0; border: 1px solid #0b78d4; display: flex; gap: 12px; padding: 1px 8px 0; margin-top: 1px; }
fieldset legend { padding: 0; margin-left: -3px; line-height: 14px; }
fieldset label { height: 20px; }
.unitopts { display: grid; grid-auto-rows: 19px; }
.last { padding: 7px 0 0 8px; }

.splitter { height: 9px; flex: none; border-top: 1px solid #a0a0a0; margin-left: 2px; background: #efefef; }
.grip { display: block; width: 400px; height: 6px; margin-left: 316px; background: repeating-linear-gradient(90deg, #8fb4dc 0 2px, #eaf3fb 2px 4px); }
.tabs { height: 20px; flex: none; display: flex; align-items: flex-end; background: #efefef; margin-left: 2px; font: 11px/16px "Liberation Sans", sans-serif; border-bottom: 1px solid #d4d4d4; }
.tabs button { height: 18px; padding: 0 5px; border: 1px solid #dadada; border-left: 0; }
.tabs .on { height: 20px; width: 45px; background: #fff; border-bottom: 0; padding-bottom: 2px; }
.page { flex: 1; min-height: 0; overflow: hidden; margin-left: 2px; padding: 6px 0 0 8px; background: #fff; border-bottom: 2px solid #ccc; font: bold 12px/12px "Liberation Sans", sans-serif; }
.page input { height: 19px; display: block; }
.page label { display: block; padding-left: 1px; white-space: nowrap; }
.key { display: flex; align-items: center; gap: 10px; }
.key input { width: 500px; }
.row { display: grid; grid-template-columns: 242px 113px 205px 1fr; margin-bottom: 5px; }
.first { margin-bottom: 2px; }
.first label { line-height: 14px; padding-bottom: 1px; }
.lastrow label { padding-bottom: 2px; }
.span { grid-column: span 3; }
.page h3 { font: inherit; padding-left: 1px; }
.w115 { width: 115px; } .w82 { width: 82px; } .w99 { width: 99px; } .w175 { width: 175px; } .w170 { width: 170px; } .w400 { width: 400px; }
.legend { height: 12px; flex: none; display: flex; gap: 136px; padding: 3px 0 0 5px; background: #f0f0f0; border-top: 2px solid #a0a0a0; }
.sw { width: 22px; border: 1px solid #808080; border-bottom: 0; }
.sw.red { background: #f00; } .sw.yellow { background: #ff0; }

.vscroll { width: 12px; flex: none; display: flex; flex-direction: column; align-items: center; padding: 5px 0; border-left: 1px solid #fff; background: #f0f0f0; }
.vscroll svg, .hscroll svg, .dscroll svg { width: 9px; height: 9px; color: #505050; }
.vtrack { flex: 1; width: 100%; padding: 4px 0 44px; }
.vthumb { height: 100%; background: #cdcdcd; }
.hscroll { height: 18px; flex: none; display: flex; align-items: center; padding: 0 16px 0 5px; border-bottom: 1px solid #dcdcdc; background: #f0f0f0; }
.hthumb { flex: 1; height: 15px; margin: 0 27px 0 5px; background: #cdcdcd; }
.status { height: 15px; flex: none; display: flex; overflow: hidden; background: #f0f0f0; color: #3c3c3c; white-space: nowrap; padding-left: 9px; }
.status > * { height: 20px; line-height: 18px; flex: none; }
.date { width: 125px; border-right: 1px solid #999; }
.social { display: flex; gap: 9px; padding: 2px 4px 0 5px; }
.social svg { width: 16px; height: 16px; }
.social .cap svg { width: 20px; }
.brand { width: 97px; color: #111; font-size: 11px; background: #f9f9f9; border-right: 1px solid #999; }
.ver { width: 217px; padding-left: 3px; font-size: 11px; border-right: 1px solid #999; }
.status .who { flex: 1; padding-left: 22px; text-align: center; }

.dialog { position: absolute; left: 378px; top: 161px; width: 638px; height: 479px; display: flex; flex-direction: column; border: 1px solid #111; border-radius: 6px 6px 0 0; padding: 1px 7px 6px 6px; background: linear-gradient(#99b4d1, #b9d1ea 30px); box-shadow: inset -1px -1px #33c8e8, inset 1px 1px #f4f8fc, 2px 6px 22px rgba(0,0,0,.6); font-size: 11px; }
.dtitle { height: 30px; flex: none; display: flex; align-items: center; gap: 4px; padding: 3px 2px 0; }
.dclose { margin-left: auto; width: 32px; height: 18px; border: 1px solid #5a1720; border-radius: 2px; background: linear-gradient(#e6a59b, #d88a7c 45%, #b83a24 50%, #d0745c); box-shadow: inset 0 0 0 1px #efb9ae; }
.dbody { flex: 1; min-height: 0; display: flex; flex-direction: column; background: #f0f0f0; }
.navrow { height: 34px; flex: none; display: flex; align-items: center; padding: 0 12px; background: #d6e4f1; border-bottom: 1px solid #a9bccf; }
.nb { width: 14px; margin-right: 15px; color: #777; }
.nb.small { width: 8px; margin-right: 9px; }
.nb.up { width: 12px; margin-right: 8px; }
.path { flex: 1; height: 22px; display: flex; align-items: center; gap: 8px; padding-left: 1px; border: 1px solid #b1c0cf; background: #f4f7fa; color: #000; }
.path .ch { color: #555; }
.path svg:first-child { margin-right: -4px; }
.pd { margin-left: auto; color: #555; }
.rf { width: 21px; height: 20px; border-left: 1px solid #b1c0cf; margin-left: -2px; }
.search { width: 202px; height: 22px; margin-left: 12px; display: flex; align-items: center; padding-right: 7px; border: 1px solid #b1c0cf; background: #f4f7fa; }
.search input { flex: 1; min-width: 0; border: 0; background: none; padding: 0 8px; }
.search input::placeholder { color: #666; opacity: 1; }
.cmdrow { height: 31px; flex: none; display: flex; align-items: center; padding: 0 15px 0 18px; background: #f5f6f7; border-bottom: 1px solid #e3e6e9; color: #1e395b; fill: #1e395b; }
.org { gap: 6px; }
.view { margin-left: auto; }
.vdrop { margin: 0 22px 0 9px; }
.pane { margin-right: 20px; }
.help { width: 16px; height: 16px; border-radius: 50%; background: #0b64c4; color: #fff; font: bold 12px/16px "Open Sans", sans-serif; }
.browse { height: 299px; flex: none; display: flex; background: #fff; }
.tree { width: 159px; list-style: none; padding-top: 16px; border-right: 1px solid #ececec; }
.tree li { height: 24px; display: flex; align-items: center; gap: 5px; white-space: nowrap; }
.tree .root { padding-left: 6px; gap: 3px; }
.tree .sel { background: #cce8ff; margin: 8px 2px 8px 0; }
.tree .root:last-child { margin-top: 8px; }
.tw { width: 9px; height: 9px; color: #999; margin-right: 8px; }
.sel .tw { margin-right: 6px; }
.tw.dark { color: #333; }
.tree .leaf { padding: 0 5px 0 32px; }
.leaf span { width: 88px; overflow: hidden; }
.pin { width: 12px; height: 12px; }
.files { flex: 1; min-width: 0; overflow: hidden; padding: 0 8px 0 6px; }
.files h4 { height: 25px; display: flex; align-items: center; gap: 4px; padding-bottom: 3px; font: 14px/20px "Open Sans", sans-serif; color: #1e3287; white-space: nowrap; }
.files h4 ~ h4 { margin: 2px 0 1px; }
.files h4 svg { width: 12px; height: 12px; color: #777; }
.files h4 i { flex: 1; height: 1px; background: #e2e2e2; }
.drive { height: 56px; display: flex; gap: 6px; padding: 3px 0 0 15px; white-space: nowrap; }
.dr { width: 44px; height: 24px; margin-top: 22px; }
.net .dr { margin-top: 15px; }
.cdi { width: 44px; height: 40px; margin-top: 5px; }
.drive > div { flex: 1; }
.drive span { display: block; font-size: 12px; }
.drive span, .drive small { padding-left: 1px; }
.drive small { display: block; font-size: 11px; color: #6d6d6d; }
.cd span { margin-top: 7px; }
.bar { width: 189px; height: 13px; margin: 1px 0; border: 1px solid #bcbcbc; background: #e6e6e6; }
.bar b { display: block; height: 100%; background: #26a0da; }
.dscroll { width: 16px; display: flex; flex-direction: column; align-items: center; padding: 5px 0 4px; background: #f0f0f0; }
.dtrack { flex: 1; width: 100%; padding: 39px 0 38px; }
.dthumb { height: 100%; background: #cdcdcd; }
.dfoot { flex: 1; padding: 9px 17px 0 0; position: relative; font-size: 12px; }
.frow { display: flex; align-items: center; justify-content: flex-end; }
.nome, .filter { position: relative; margin-left: 5px; }
.nome { width: 235px; }
.nome input { width: 100%; height: 24px; border-color: #7a7a7a; display: block; }
.filter { width: 188px; margin-left: 12px; }
.filter select { height: 23px; background: #e1e1e1; border-color: #adadad; padding: 0 3px; font-size: 11px; }
.nome svg, .filter svg { position: absolute; right: 4px; top: 8px; width: 10px; height: 10px; color: #555; }
.brow { display: flex; justify-content: flex-end; gap: 14px; padding: 6px 1px 0 0; }
.brow button { width: 86px; height: 24px; background: #e1e1e1; border: 1px solid #adadad; }
.brow .primary { border: 2px solid #0078d7; }
.size { position: absolute; right: 3px; bottom: 2px; width: 8px; height: 8px; }

.mark { position: absolute; color: #f00; font: bold 16px/18px "Liberation Sans", sans-serif; white-space: nowrap; pointer-events: none; }
.bluebox { left: 4px; top: 239px; width: 163px; height: 26px; border: 2px solid #00b0f0; }
.greenbox { left: 181px; top: 236px; width: 268px; height: 50px; border: 2px solid #0f0; }
.n1 { left: 389px; top: 102px; color: #ed1c24; }
.n2 { left: 15px; top: 222px; font-weight: normal; font-size: 14px; color: #ed1c24; }
.n3 { left: 250px; top: 220px; }
.n4 { left: 307px; top: 331px; width: 290px; font-size: 19px; line-height: 22px; white-space: normal; }
.arrows { left: -1px; top: -1px; }
```
